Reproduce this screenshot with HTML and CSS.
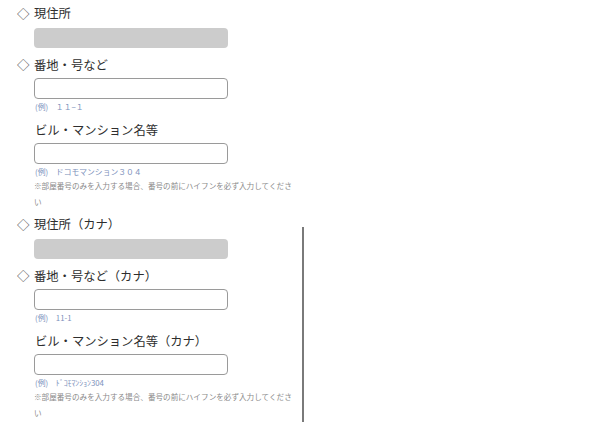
FILE: index.html
```html
<!DOCTYPE html>
<html lang="ja">
<head>
<meta charset="utf-8">
<link rel="stylesheet" href="styles.css">
</head>
<body>
<div class="form">
  <section class="group">
    <div class="label head"><span class="mark">◇</span>現住所</div>
    <div class="readonly"></div>
    <div class="label sub"><span class="mark">◇</span>番地・号など</div>
    <div class="field"></div>
    <div class="example">(例)　１１−１</div>
    <div class="label sub2">ビル・マンション名等</div>
    <div class="field"></div>
    <div class="example">(例)　ドコモマンション３０４</div>
    <div class="note">※部屋番号のみを入力する場合、番号の前にハイフンを必ず入力してください</div>
  </section>
  <section class="group second">
    <div class="label head"><span class="mark">◇</span>現住所（カナ）</div>
    <div class="readonly"></div>
    <div class="label sub"><span class="mark">◇</span>番地・号など（カナ）</div>
    <div class="field"></div>
    <div class="example">(例)　11-1</div>
    <div class="label sub2">ビル・マンション名等（カナ）</div>
    <div class="field"></div>
    <div class="example">(例)　ﾄﾞｺﾓﾏﾝｼｮﾝ304</div>
    <div class="note">※部屋番号のみを入力する場合、番号の前にハイフンを必ず入力してください</div>
  </section>
  <div class="scrollbar"></div>
</div>
</body>
</html>
```

FILE: styles.css
```css
html, body {
  margin: 0;
  padding: 0;
  background: #ffffff;
}
body {
  width: 600px;
  height: 435px;
  overflow: hidden;
  font-family: "Noto Sans CJK JP", "Noto Sans", sans-serif;
  color: #333333;
}
.form {
  position: relative;
  padding-left: 34px;
}
.group {
  display: flex;
  flex-direction: column;
  align-items: flex-start;
}
.group.second {
  margin-top: 2px;
}
.label {
  font-size: 12.3px;
  color: #2e2e2e;
  white-space: nowrap;
  position: relative;
}
.label.head {
  line-height: 27px;
  height: 27px;
}
.label.sub {
  line-height: 20px;
  margin-top: 7px;
}
.label.sub2 {
  line-height: 20px;
  margin-top: 7px;
  padding-left: 1px;
}
.mark {
  position: absolute;
  left: -17px;
  top: 0;
  font-size: 12.5px;
  color: #3a3a3a;
}
.readonly {
  width: 194px;
  height: 20px;
  margin-top: 1px;
  background: #cccccc;
  border-radius: 4px;
}
.field {
  box-sizing: border-box;
  width: 194px;
  height: 21px;
  margin-top: 3px;
  background: #ffffff;
  border: 1px solid #9a9a9a;
  border-radius: 4px;
}
.example {
  font-size: 7.8px;
  line-height: 13px;
  color: #7b90bb;
  padding-top: 1px;
  padding-left: 1px;
}
.note {
  width: 262px;
  font-size: 7.6px;
  line-height: 15.5px;
  color: #8a8a8a;
}
.scrollbar {
  position: absolute;
  left: 302px;
  top: 227px;
  width: 2px;
  height: 195px;
  background: #7a7a7a;
}
```
